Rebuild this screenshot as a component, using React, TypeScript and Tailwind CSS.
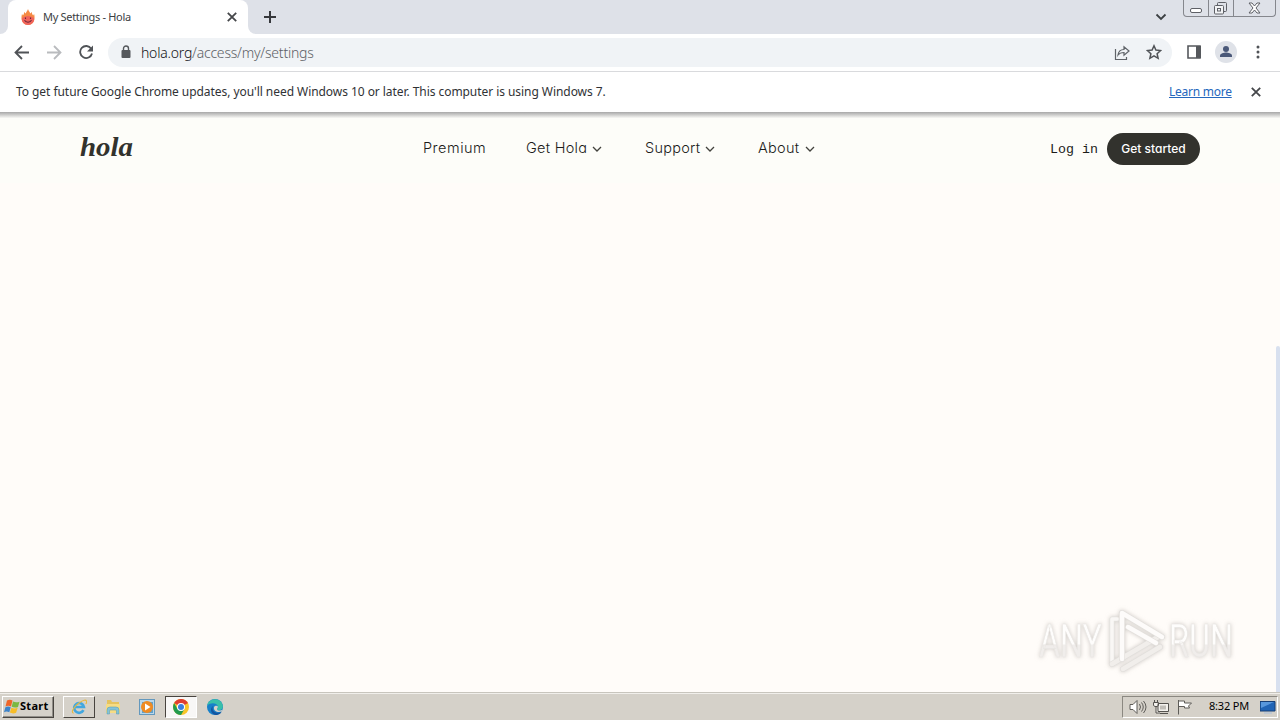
import type { ReactNode } from 'react';

const Caret = () => (
  <svg className="mt-[2px] h-3 w-3" viewBox="0 0 12 12" fill="none" stroke="#42423d" strokeWidth="1.3">
    <path d="M2 4l4 4 4-4" />
  </svg>
);

const Cross = () => (
  <svg className="h-3 w-3 shrink-0" viewBox="0 0 12 12" fill="none" stroke="#45474a" strokeWidth="1.8">
    <path d="M1.800 1.800l8.400 8.400M10.200 1.800l-8.400 8.400" />
  </svg>
);

const Flame = () => (
  <svg className="h-4 w-4 shrink-0" viewBox="0 0 16 16">
    <path d="M8 0c.4 2 1.800 2.700 2.200 4.500L12 3c-.2 1.800.4 2.500 1.200 3.500.2-.7.500-1.100.9-1.500.5 2 .7 4 .1 6.300C13.400 14.200 11.200 16 8 16s-5.400-1.800-6.200-4.700C1.200 9 1.500 7 2 5c.5.5.7.9.9 1.500C3.700 5.500 4.200 4.800 4 3l1.800 1.500C6.200 2.700 7.500 2 8 0z" fill="#f58a45" />
    <path d="M2 9q6-4 12 0c1 4-3 7-6 7s-7-3-6-7z" fill="#f0635b" />
    <path d="M5.500 8.500v1.500M10.500 8.500v1.500M4.500 11.300c1.500 2.500 5.500 2.500 7 0" fill="none" stroke="#6b2638" strokeWidth="1.100" />
  </svg>
);

const TabStrip = () => (
  <div className="flex h-[34px] bg-[#dee1e8]">
    <div className="w-2 bg-white">
      <div className="h-full rounded-br-lg bg-[#dee1e8]" />
    </div>
    <div className="flex w-60 items-center rounded-t-lg bg-white pr-[10px] pl-3">
      <Flame />
      <span className="ml-[7px] flex-1 text-[11px] tracking-[-0.31px] whitespace-nowrap text-[#3c4043]">My Settings - Hola</span>
      <Cross />
    </div>
    <div className="w-2 bg-white">
      <div className="h-full rounded-bl-lg bg-[#dee1e8]" />
    </div>
    <svg className="mt-[10px] ml-[7px] h-[14px] w-[14px]" viewBox="0 0 14 14" stroke="#36383c" strokeWidth="2">
      <path d="M7 1v12M1 7h12" />
    </svg>
    <svg className="mt-[11px] ml-auto h-3 w-3" viewBox="0 0 12 12" fill="none" stroke="#3c4043" strokeWidth="1.8">
      <path d="M1.500 3.500L6 8l4.500-4.500" />
    </svg>
    <div className="mr-1 ml-4 flex h-[17px] w-[93px] rounded-b border border-t-0 border-[#85878d] text-[#5e6066]">
      <svg className="h-4 w-[91px]" viewBox="0 0 91 16" fill="none" stroke="currentColor">
        <path d="M24.500 0v16M49.500 0v16" stroke="#85878d" />
        <rect x="6.500" y="8.500" width="11" height="4" rx="1.500" fill="#fff" />
        <path d="M33.500 5V3.500q0-1 1-1h7q1 0 1 1v7q0 1-1 1H40" />
        <rect x="30.500" y="5.500" width="9" height="8.500" rx="1" fill="#f2f3f5" />
        <rect x="33.500" y="8.500" width="3" height="2.500" />
        <path d="M65 3h3l2.500 3L73 3h3l-4 5 4 5h-3l-2.500-3-2.500 3h-3l4-5z" fill="#fff" />
      </svg>
    </div>
  </div>
);

const Toolbar = () => (
  <div className="flex h-[38px] items-center border-b border-[#d9dadd] bg-white pl-[14px]">
    <svg className="h-4 w-4" viewBox="0 0 16 16" fill="none" stroke="#505357" strokeWidth="1.8">
      <path d="M15 7.500H2M8 1L1.500 7.500 8 14" />
    </svg>
    <svg className="ml-4 h-4 w-4" viewBox="0 0 16 16" fill="none" stroke="#b9bbbe" strokeWidth="1.8">
      <path d="M1 7.500h13M8 1l6.500 6.500L8 14" />
    </svg>
    <svg className="ml-4 h-4 w-4" viewBox="0 0 16 16" fill="none" stroke="#505357" strokeWidth="1.8">
      <path d="M13.200 3.700A6 6 0 1 0 14 8.500" />
      <path d="M15 .5v6H9z" fill="#505357" stroke="none" />
    </svg>
    <div className="ml-[14px] flex h-[29px] w-[1064px] items-center rounded-full bg-[#f0f3f6] pr-[10px] pl-[13px]">
      <svg className="mb-[2px] h-[14px] w-[10px]" viewBox="0 0 10 14">
        <rect x="0.500" y="5" width="9" height="8" rx="1" fill="#55585c" />
        <path d="M2.500 6V3.500a2.500 2.500 0 0 1 5 0V6" fill="none" stroke="#55585c" strokeWidth="1.400" />
      </svg>
      <span className="ml-[10px] flex-1 text-[14px] font-light tracking-[-0.22px] text-[#5c6065]">
        <span className="text-[#101214]">hola.org</span>/access/my/settings
      </span>
      <svg className="mr-4 h-4 w-4" viewBox="0 0 16 16" fill="none" stroke="#5f6368" strokeWidth="1.200">
        <path d="M1.500 4v10.500h11V12" />
        <path d="M4 10c.5-4 3-5.500 6-5.500V1.800L15 6l-5 4.200V7.500C7.500 7.500 5.500 8 4 10z" />
      </svg>
      <svg className="mb-px h-4 w-4" viewBox="0 0 16 16" fill="none" stroke="#505357" strokeWidth="1.500">
        <path d="M8 1.800l1.900 4.300 4.700.5-3.500 3.100 1 4.600L8 11.900l-4.100 2.400 1-4.600L1.400 6.600l4.700-.5z" />
      </svg>
    </div>
    <svg className="mb-px ml-[15px] h-[14px] w-[14px]" viewBox="0 0 14 14">
      <path d="M1 1h12v12H1z" fill="#fff" stroke="#55585c" strokeWidth="1.600" />
      <path d="M9 1h5v12H9z" fill="#55585c" />
    </svg>
    <svg className="mb-px ml-[14px] h-[22px] w-[22px]" viewBox="0 0 22 22" fill="#4a5878">
      <circle cx="11" cy="11" r="11" fill="#dfe2e8" />
      <circle cx="11" cy="8" r="3" />
      <path d="M5 16v-1.500c0-2 4-3 6-3s6 1 6 3V16z" />
    </svg>
    <svg className="mb-px ml-[19px] h-[14px] w-1" viewBox="0 0 4 14" fill="#505357">
      <circle cx="2" cy="2" r="1.500" />
      <circle cx="2" cy="7" r="1.500" />
      <circle cx="2" cy="12" r="1.500" />
    </svg>
  </div>
);

const InfoBar = () => (
  <div className="flex h-10 items-center bg-white pr-[18px] pl-4 text-[12px] text-[#303235]">
    <span className="flex-1 tracking-[-0.056px]">
      To get future Google Chrome updates, you'll need Windows 10 or later. This computer is using Windows 7.
    </span>
    <span className="mr-[18px] w-[63px] tracking-[-0.25px] whitespace-nowrap text-[#2567bd] underline">Learn more</span>
    <Cross />
  </div>
);

const SiteHeader = () => (
  <header className="flex h-[65px] items-start bg-[#fdfdf9] pt-[15px] font-[Inter,sans-serif] [font-feature-settings:'cv11'] text-[14.5px] text-[#1c1c19]">
    <div className="ml-[75px] w-[348px]">
      <svg className="h-9 w-16" viewBox="0 0 64 36">
        <text x="5" y="22.500" textLength="53" lengthAdjust="spacingAndGlyphs" className="fill-[#32322d] font-['Liberation_Serif',serif] text-[27px] font-bold italic">hola</text>
      </svg>
    </div>
    <nav className="flex h-[30px] flex-1 items-center font-light tracking-[0.27px] whitespace-nowrap">
      <span className="w-[103px] tracking-[0.5px]">Premium</span>
      <span className="flex w-[119px] items-center gap-1">Get Hola <Caret /></span>
      <span className="flex w-[113px] items-center gap-1">Support <Caret /></span>
      <span className="flex items-center gap-[5px]">About <Caret /></span>
    </nav>
    <span className="mr-[9px] flex h-[34px] w-12 items-center font-['Liberation_Mono',monospace] text-[13.300px] whitespace-nowrap">Log in</span>
    <button className="mr-20 flex h-8 w-[93px] items-center justify-center rounded-full bg-[#32322d] text-[12px] font-medium whitespace-nowrap text-white">Get started</button>
  </header>
);

const Watermark = () => (
  <svg className="absolute right-5 bottom-[15px] h-[70px] w-[228px] drop-shadow-[0_0_2px_#aaa5a090]" viewBox="0 0 228 70">
    <defs>
      <linearGradient id="fade" x1="0" y1="0" x2="0" y2="1">
        <stop offset="0.55" stopColor="#fefdfc" />
        <stop offset="0.58" stopColor="#f0edeb" />
      </linearGradient>
    </defs>
    <g className="font-[Roboto,sans-serif] text-[46px]" fill="url(#fade)" stroke="#e9e6e3" strokeWidth="0.6">
      <text x="7" y="50" textLength="63" lengthAdjust="spacingAndGlyphs">ANY</text>
      <text x="137" y="50" textLength="64" lengthAdjust="spacingAndGlyphs">RUN</text>
    </g>
    <g fill="none" strokeLinejoin="round" strokeLinecap="round">
      <path d="M85 12h-5v44l7-3" stroke="#e6e3e0" strokeWidth="5" />
      <path d="M85 12h-5v44l7-3" stroke="#f9f7f5" strokeWidth="3.500" />
      <path d="M80 57l46-27M91 62l37-22" stroke="#e2dfdc" strokeWidth="6" />
      <path d="M80 57l46-27M91 62l37-22" stroke="#f1eeeb" strokeWidth="4.500" />
      <path d="M90 52V6l40 24M96 20l28 16" stroke="#e3e0dd" strokeWidth="6" />
      <path d="M90 52V6l40 24M96 20l28 16" stroke="#fdfbfa" strokeWidth="4.500" />
    </g>
  </svg>
);

const TaskSlot = ({ children, className = '' }: { children: ReactNode; className?: string }) => (
  <div className={`flex h-[22px] w-8 items-center justify-center ${className}`}>{children}</div>
);

const Taskbar = () => (
  <div className="flex h-7 items-center border-t border-[#c8c5bd] bg-[#d5d1c9] pl-[2px] shadow-[inset_0_1px_#f1efeb]">
    <div className="flex h-[22px] w-[52px] items-center border border-t-white border-r-[#48443f] border-b-[#48443f] border-l-white shadow-[inset_-1px_-1px_#918e88]">
      <svg className="ml-px h-4 w-4" viewBox="0 0 16 16">
        <path d="M3 1.500q2.800-1.500 5.500 0L7 7.500q-2.700-1.400-5.500 0z" fill="#ef6528" />
        <path d="M9 2.500q3 1.500 6.500.2L14 8q-3 1.300-6.300-.2z" fill="#7bb842" />
        <path d="M1.400 8.200q2.700-1.300 5.300 0l-1.400 5q-2.800-1.200-5.300 0z" fill="#3d83c9" />
        <path d="M7.400 8.700q3 1.400 6.300.1l-1.600 5q-3.200 1.300-6.200-.2z" fill="#f7bd28" />
      </svg>
      <span className="text-[11px] font-bold tracking-[0.3px] text-black">Start</span>
    </div>
    <TaskSlot className="ml-[9px] border border-t-white border-r-[#48443f] border-b-[#48443f] border-l-white">
      <svg className="h-4 w-4" viewBox="0 0 18 18" fill="none">
        <path d="M14 12.500A5.500 5.500 0 1 1 14.500 9H5" stroke="#42a7df" strokeWidth="3" />
        <path d="M3 16C-1 15 4 8 9 4.500s8-4 8.500-2-1 3-1 3" stroke="#e7b93f" strokeWidth="1.300" />
      </svg>
    </TaskSlot>
    <TaskSlot className="ml-[2px]">
      <svg className="h-[18px] w-[18px]" viewBox="0 0 18 18">
        <path d="M3 2h4l1 2h7v10H3z" fill="#e5c35e" />
        <path d="M2 6h14v9H2z" fill="#f6dc84" />
        <path d="M3 16v-4q0-3 3-3h6q3 0 3 3v4h-2.500v-3q0-1-1-1h-5q-1 0-1 1v3z" fill="#83c3d9" stroke="#5598ad" strokeWidth="0.500" />
      </svg>
    </TaskSlot>
    <TaskSlot className="ml-[2px]">
      <svg className="h-4 w-4" viewBox="0 0 16 16">
        <rect x="0.500" y="0.500" width="15" height="15" fill="#b9d7eb" stroke="#6398bd" />
        <rect x="3" y="3" width="11" height="11" fill="#62a1c9" />
        <circle cx="8" cy="8" r="6" fill="#ef8b23" />
        <path d="M6 4.500l5.500 3.500L6 11.500z" fill="#fff" />
      </svg>
    </TaskSlot>
    <TaskSlot className="ml-[2px] border border-t-[#48443f] border-r-white border-b-white border-l-[#48443f] bg-[#f8f7f6]">
      <svg className="h-4 w-4" viewBox="0 0 16 16">
        <circle cx="8" cy="8" r="8" fill="#f8c529" />
        <path d="M8 8L1.100 4A8 8 0 0 1 15 4z" fill="#df3e31" />
        <path d="M1.100 4A8 8 0 0 0 8 16l3.500-6L8 8 4.500 10z" fill="#229b4e" />
        <circle cx="8" cy="8" r="4" fill="#fff" />
        <circle cx="8" cy="8" r="3" fill="#397fdf" />
      </svg>
    </TaskSlot>
    <TaskSlot className="ml-[2px]">
      <svg className="h-4 w-4" viewBox="0 0 16 16">
        <circle cx="8" cy="8" r="8" fill="#1780c9" />
        <path d="M.2 6.500C1-1 14-3 15.900 7c.3 5-6 5-6 3 0-1 1-1 1-2.500C10 4 4 3 .2 6.500z" fill="#39bfa9" />
        <path d="M6 7c-2 5 3 8 8.500 6-2 3.500-6 3-6 3C3 15 3 9 6 7z" fill="#1455a0" />
        <path d="M10 10c0 2 4 2 5.500.5l-1 2C11 14 6 12 7 8c1-1.500 3-1.500 3.900-.5 0 1.500-1 1.500-.9 2.500z" fill="#d5d1c9" />
      </svg>
    </TaskSlot>
    <div className="mr-[2px] ml-auto flex h-[22px] w-[156px] items-center border border-t-[#8b8881] border-r-white border-b-white border-l-[#8b8881] pl-[6px]">
      <svg className="h-4 w-[18px]" viewBox="0 0 18 16" fill="#fff" stroke="#5e5c58">
        <path d="M1 5.500h3l4-4v13l-4-4H1z" />
        <path d="M10.500 5q2 3 0 6M12.500 3.500q3.500 4.500 0 9M14.500 2q5 6 0 12" fill="none" />
      </svg>
      <svg className="ml-[5px] h-4 w-[18px]" viewBox="0 0 18 16" fill="#f3f1ed" stroke="#55534f">
        <path d="M6 4.500h10.500v8H6zM8 14.500h8M2.500 1v3M5.500 1v3M1.500 3.500h5v3l-1.500 1H3l-1.500-1zM4 8v6h4" />
        <path d="M8 6.500h6v4H8z" fill="#c1beb8" stroke="none" />
      </svg>
      <svg className="ml-[5px] h-4 w-[18px]" viewBox="0 0 18 16" fill="#fff" stroke="#5e5c58">
        <path d="M3.500 1v14.500M3.500 2h6v2h7l-3 3 1 2h-5V7.500h-6z" />
      </svg>
      <span className="ml-[16px] w-[51px] text-[11px] tracking-[-0.2px] whitespace-nowrap text-black">8:32 PM</span>
      <svg className="h-4 w-4" viewBox="0 0 16 16">
        <path d="M0 2.500h15V12H0z" fill="#2164b5" stroke="#173e75" />
        <path d="M1 3h13L1 9z" fill="#5897dc" />
        <path d="M4 13h8v2H4z" fill="#bfc8d2" />
      </svg>
    </div>
  </div>
);

export default function App() {
  return (
    <div className="flex h-[720px] w-[1280px] flex-col overflow-hidden font-['Noto_Sans',sans-serif]">
      <TabStrip />
      <Toolbar />
      <InfoBar />
      <div className="h-[6px] shrink-0 bg-linear-to-b from-[#a8a8a8] to-[#f8f8f5]" />
      <SiteHeader />
      <main className="relative flex flex-1 items-end justify-end bg-[#fffcf9]">
        <div className="h-[346px] w-1 rounded-t-sm bg-[#d8e0ef]" />
        <Watermark />
      </main>
      <Taskbar />
    </div>
  );
}
